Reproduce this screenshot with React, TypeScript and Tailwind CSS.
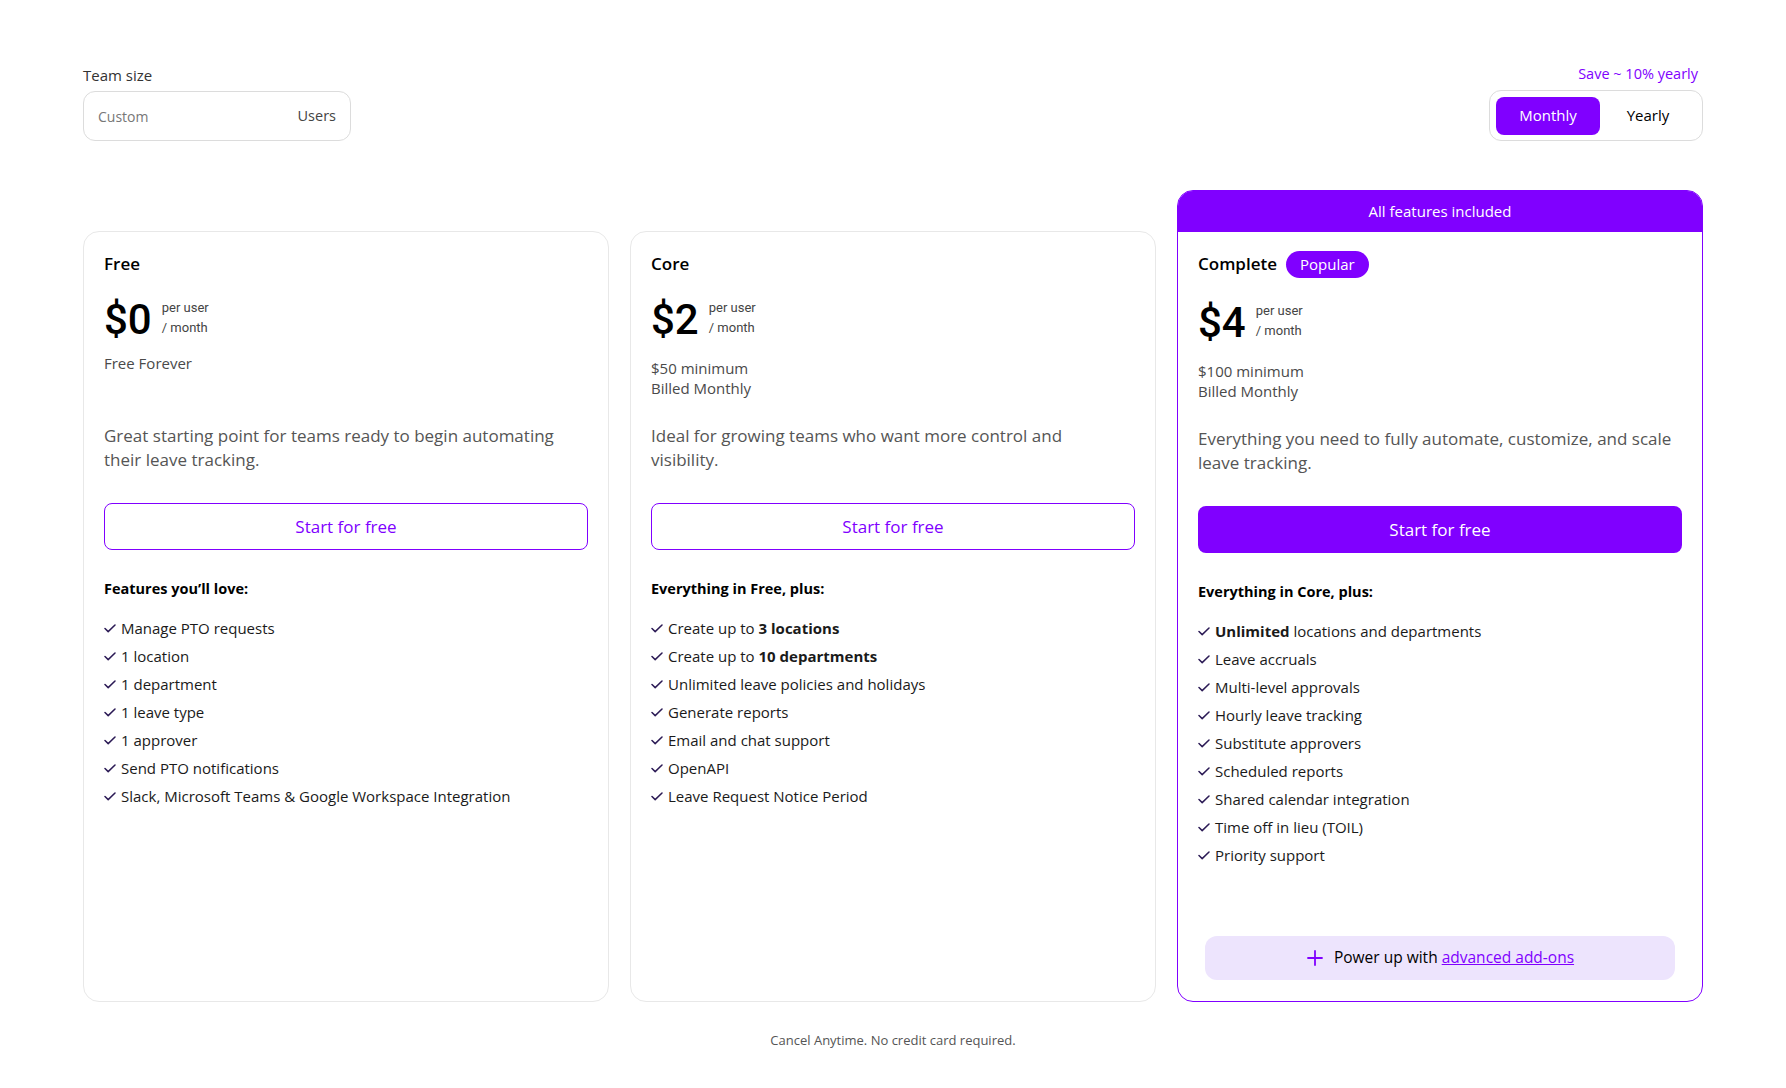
import React from 'react';

type Plan = {
  name: string;
  price: string;
  sub: string[];
  description: string;
  heading: string;
  features: React.ReactNode[];
  popular?: boolean;
};

const plans: Plan[] = [
  {
    name: 'Free',
    price: '$0',
    sub: ['Free Forever'],
    description: 'Great starting point for teams ready to begin automating their leave tracking.',
    heading: 'Features you\u2019ll love:',
    features: [
      'Manage PTO requests',
      '1 location',
      '1 department',
      '1 leave type',
      '1 approver',
      'Send PTO notifications',
      'Slack, Microsoft Teams & Google Workspace Integration',
    ],
  },
  {
    name: 'Core',
    price: '$2',
    sub: ['$50 minimum', 'Billed Monthly'],
    description: 'Ideal for growing teams who want more control and visibility.',
    heading: 'Everything in Free, plus:',
    features: [
      <>Create up to <b className="font-bold">3 locations</b></>,
      <>Create up to <b className="font-bold">10 departments</b></>,
      'Unlimited leave policies and holidays',
      'Generate reports',
      'Email and chat support',
      'OpenAPI',
      'Leave Request Notice Period',
    ],
  },
  {
    name: 'Complete',
    price: '$4',
    sub: ['$100 minimum', 'Billed Monthly'],
    description: 'Everything you need to fully automate, customize, and scale leave tracking.',
    heading: 'Everything in Core, plus:',
    popular: true,
    features: [
      <><b className="font-bold">Unlimited</b> locations and departments</>,
      'Leave accruals',
      'Multi-level approvals',
      'Hourly leave tracking',
      'Substitute approvers',
      'Scheduled reports',
      'Shared calendar integration',
      'Time off in lieu (TOIL)',
      'Priority support',
    ],
  },
];

const Check = () => (
  <svg width="12" height="9" viewBox="0 0 12 9" fill="none" className="shrink-0">
    <path d="M1 4.5L4.2 7.6L11 1" stroke="#2b1a55" strokeWidth="1.5" strokeLinecap="round" strokeLinejoin="round" />
  </svg>
);

const PlanBody: React.FC<{ plan: Plan }> = ({ plan }) => (
  <div className="flex flex-col flex-1 px-5 pt-5">
    <div className="flex items-center gap-[9px] h-6">
      <span className="text-[17px] font-semibold text-black">{plan.name}</span>
      {plan.popular && (
        <span className="bg-[#8000ff] text-white text-[15px] font-medium rounded-full px-[14px] h-[27px] flex items-center">
          Popular
        </span>
      )}
    </div>
    <div className={`flex items-center gap-[10px] h-14 ${plan.popular ? 'mt-[19px]' : 'mt-4'}`}>
      <span className="font-['Roboto'] text-[42px] font-medium text-black leading-none">{plan.price}</span>
      <div className="font-['Roboto'] text-[13px] leading-5 text-[#444] -mt-1">
        <div>per user</div>
        <div>/ month</div>
      </div>
    </div>
    <div className="mt-[10px] h-10 text-[15px] leading-5 text-[#4a4a4a]">
      {plan.sub.map((s) => (
        <div key={s} className={plan.sub.length === 1 ? '-mt-[5px]' : ''}>{s}</div>
      ))}
    </div>
    <p className="mt-[26px] min-h-12 max-w-[478px] text-[17px] leading-6 text-[#555]">{plan.description}</p>
    <button
      className={`mt-[31px] h-[47px] rounded-lg text-[17px] ${
        plan.popular
          ? 'bg-[#8000ff] text-white font-medium'
          : 'border border-[#8000ff] text-[#8000ff] bg-white'
      }`}
    >
      Start for free
    </button>
    <div className="mt-[29px] text-[14.5px] leading-5 font-bold text-black">{plan.heading}</div>
    <ul className="mt-[15px] flex flex-col">
      {plan.features.map((f, i) => (
        <li key={i} className="flex items-center gap-[5px] h-7 text-[15px] text-[#1a1a1a]">
          <Check />
          <span>{f}</span>
        </li>
      ))}
    </ul>
    {plan.popular && (
      <div className="mt-[67px] mb-[21px] mx-[7px] h-11 rounded-xl bg-[#ede4fd] flex items-center justify-center gap-[10px] text-[15.5px] text-black">
        <svg width="18" height="18" viewBox="0 0 18 18" fill="none">
          <path d="M9 2v14M2 9h14" stroke="#8000ff" strokeWidth="1.8" strokeLinecap="round" />
        </svg>
        <span>
          Power up with{' '}
          <a href="#" className="text-[#8000ff] underline">
            advanced add-ons
          </a>
        </span>
      </div>
    )}
  </div>
);

export default function App() {
  return (
    <div className="min-h-screen bg-white font-['Open_Sans',sans-serif] text-black">
      <div className="w-[1620px] mx-auto pt-16">
        <div className="flex justify-between items-end">
          <div>
            <div className="text-[15px] leading-5 text-[#333]">Team size</div>
            <div className="mt-[6px] w-[268px] h-[50px] border border-[#dcdcdc] rounded-xl flex items-center justify-between px-[14px]">
              <span className="text-[14px] text-[#777]">Custom</span>
              <span className="text-[14.5px] text-[#444]">Users</span>
            </div>
          </div>
          <div className="flex flex-col items-end">
            <div className="text-[14.5px] leading-5 text-[#8000ff] mr-[5px]">Save ~ 10% yearly</div>
            <div className="mt-[6px] w-[214px] h-[51px] border border-[#dcdcdc] rounded-xl p-[6px] flex items-center">
              <button className="w-[104px] h-[38px] rounded-lg bg-[#8000ff] text-white text-[15px] font-medium">
                Monthly
              </button>
              <button className="flex-1 h-[38px] text-[15px] text-black">Yearly</button>
            </div>
          </div>
        </div>

        <div className="mt-[49px] grid grid-cols-3 gap-[21px]">
          <div className="mt-[41px] border border-[#e8e8e8] rounded-2xl flex flex-col">
            <PlanBody plan={plans[0]} />
          </div>
          <div className="mt-[41px] border border-[#e8e8e8] rounded-2xl flex flex-col">
            <PlanBody plan={plans[1]} />
          </div>
          <div className="border border-[#8000ff] rounded-2xl flex flex-col overflow-hidden">
            <div className="h-[41px] bg-[#8000ff] text-white text-[15px] font-medium flex items-center justify-center">
              All features included
            </div>
            <PlanBody plan={plans[2]} />
          </div>
        </div>

        <div className="mt-7 text-center text-[13px] leading-5 text-[#555]">
          Cancel Anytime. No credit card required.
        </div>
      </div>
    </div>
  );
}
